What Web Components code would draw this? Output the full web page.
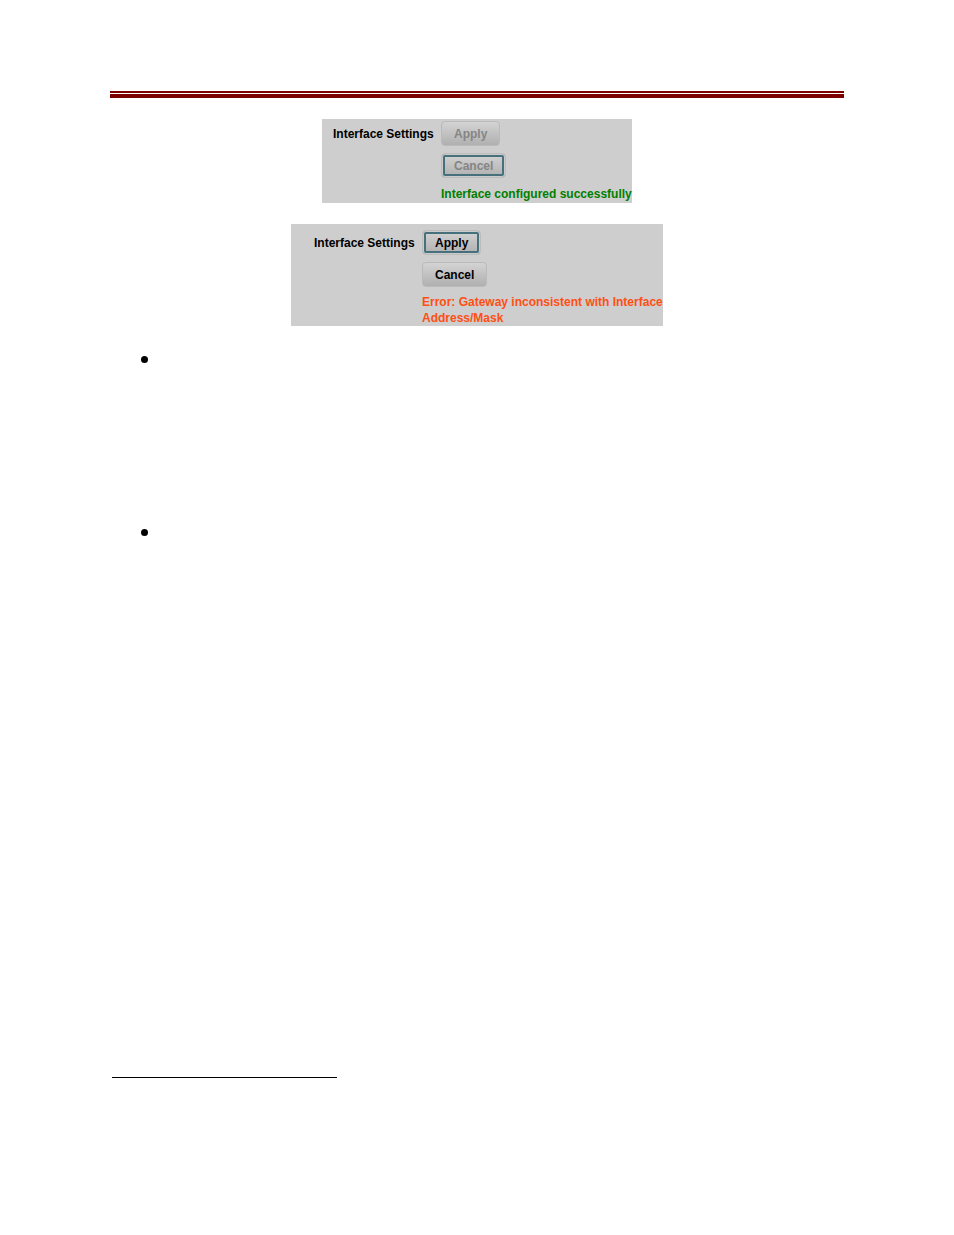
<!DOCTYPE html>
<html lang="en">
<head>
<meta charset="utf-8">
<title>Interface Settings</title>
<style>
	body{
		margin: 0;
		background: #fff;
		color: #000;
		font-family: "Liberation Sans", Arial, sans-serif;
	}
</style>
</head>
<body>

<manual-page>
	<settings-panel label="Interface Settings" status="ok">
		<panel-button slot="actions" disabled>Apply</panel-button>
		<panel-button slot="actions" disabled ring>Cancel</panel-button>
		Interface configured successfully
	</settings-panel>
	<settings-panel label="Interface Settings" status="error">
		<panel-button slot="actions" ring>Apply</panel-button>
		<panel-button slot="actions">Cancel</panel-button>
		Error: Gateway inconsistent with Interface Address/Mask
	</settings-panel>
	<bullet-list count="2" slot="notes"></bullet-list>
</manual-page>

<script>
class ManualPage extends HTMLElement{

	constructor(){
		super();
		this.attachShadow({mode:'open'}).innerHTML=`
			<style>
			:host{
				display: flex;
				flex-direction: column;
				box-sizing: border-box;
				min-height: 100vh;
				padding: 91px 110px 157px;
			}

			/* thin line over a thick one */
			header{
				height: 1px;
				border-top: 2px solid #7d0000;
				border-bottom: 4px solid #7d0000;
			}

			.figures{
				display: flex;
				flex-direction: column;
				align-items: center;
				gap: 21px;
				margin-top: 21px;
			}

			.footnote{
				width: 225px;
				height: 1px;
				margin: auto 0 0 2px;
				border: 0;
				background: #000;
			}
			</style>

			<header></header>
			<main>
				<div class="figures"><slot></slot></div>
				<slot name="notes"></slot>
			</main>
			<hr class="footnote">
		`;
	}
}


class SettingsPanel extends HTMLElement{

	constructor(){
		super();
		this.attachShadow({mode:'open'}).innerHTML=`
			<style>
			:host{
				display: grid;
				grid-template-columns: auto 1fr;
				column-gap: 10px;
				box-sizing: border-box;
				width: 100%;
				max-width: 310px;
				padding: 2px 0 1px 11px;
				background: #cecece;
				font-size: 12px;
				font-weight: bold;
				line-height: 16px;
			}

			:host([status="error"]){
				max-width: 372px;
				padding: 6px 0 0 23px;
			}

			.label{
				width: 98px;
				padding-top: 5px;
				white-space: nowrap;
			}

			.content{
				display: flex;
				flex-direction: column;
				align-items: flex-start;
				gap: 7px;
			}

			.message{
				margin: 0;
				padding-top: 1px;
				color: #008000;
			}

			:host([status="error"]) .message{
				padding-top: 0;
				color: #ff4f14;
			}
			</style>

			<div class="label"></div>
			<div class="content">
				<slot name="actions"></slot>
				<p class="message"><slot></slot></p>
			</div>
		`;
	}

	connectedCallback(){
		this.shadowRoot.querySelector('.label').textContent=this.getAttribute('label');
	}
}


class PanelButton extends HTMLElement{

	constructor(){
		super();
		this.attachShadow({mode:'open'}).innerHTML=`
			<style>
			:host{
				display: block;
			}

			button{
				display: block;
				height: 25px;
				padding: 0 12px;
				border: 1px solid #bababa;
				border-radius: 4px;
				background: linear-gradient(#d3d3d3, #b0b0b0);
				color: #000;
				font: inherit;
			}

			button:disabled{
				color: #858585;
			}

			:host([ring]) button{
				border-color: #bcbcbc;
				box-shadow: inset 0 0 0 1px #cbcbcb, inset 0 0 0 3px #45707c;
			}
			</style>

			<button type="button"><slot></slot></button>
		`;
	}

	connectedCallback(){
		this.shadowRoot.querySelector('button').disabled=this.hasAttribute('disabled');
	}
}


class BulletList extends HTMLElement{

	constructor(){
		super();
		this.attachShadow({mode:'open'}).innerHTML=`
			<style>
			:host{
				display: block;
				margin: 30px 0 0 31px;
			}

			ul{
				display: grid;
				gap: 166px;
				margin: 0;
				padding: 0;
				list-style: none;
			}

			li{
				width: 7px;
				height: 7px;
				border-radius: 50%;
				background: #000;
			}
			</style>

			<ul></ul>
		`;
	}

	connectedCallback(){
		const list=this.shadowRoot.querySelector('ul');
		for(var i=0; i<Number(this.getAttribute('count')); i++){
			list.appendChild(document.createElement('li'));
		}
	}
}

window.customElements.define('manual-page', ManualPage);
window.customElements.define('settings-panel', SettingsPanel);
window.customElements.define('panel-button', PanelButton);
window.customElements.define('bullet-list', BulletList);
</script>
</body>
</html>
